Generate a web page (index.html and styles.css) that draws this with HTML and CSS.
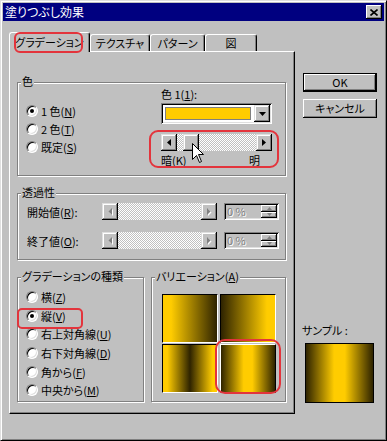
FILE: index.html
```html
<!DOCTYPE html>
<html lang="ja">
<head>
    <meta charset="UTF-8">
    <title>塗りつぶし効果</title>
    <link rel="stylesheet" href="styles.css">
</head>
<body>
    <div class="window">
        <div class="titlebar">
            <span class="title">塗りつぶし効果</span>
            <span class="close_btn">
                <svg width="8" height="7" viewBox="0 0 8 7"><path d="M0.5 0.5 L7.5 6.5 M7.5 0.5 L0.5 6.5" stroke="#000" stroke-width="1.6" fill="none"/></svg>
            </span>
        </div>
        <div class="client">
            <div class="tabs_col">
                <div class="tab_row">
                    <div class="tab active mark mark_tab" style="width:81px">グラデーション</div>
                    <div class="tab" style="width:60px">テクスチャ</div>
                    <div class="tab" style="width:55px">パターン</div>
                    <div class="tab" style="width:52px">図</div>
                </div>
                <div class="tab_panel">
                    <div class="group group_color">
                        <span class="legend">色</span>
                        <div class="radio_col">
                            <div class="radio_row"><span class="radio checked"></span><span>1 色(<u>N</u>)</span></div>
                            <div class="radio_row"><span class="radio"></span><span>2 色(<u>T</u>)</span></div>
                            <div class="radio_row"><span class="radio"></span><span>既定(<u>S</u>)</span></div>
                        </div>
                        <div class="color_col">
                            <div class="color_label">色 1(<u>1</u>):</div>
                            <div class="combo">
                                <div class="swatch"></div>
                                <div class="drop_btn">
                                    <svg width="7" height="4" viewBox="0 0 7 4"><polygon points="0,0 7,0 3.5,4" fill="#000"/></svg>
                                </div>
                            </div>
                            <div class="slider_wrap mark mark_slider">
                                <div class="scroll">
                                    <div class="sb_btn"><svg width="4" height="7" viewBox="0 0 4 7"><polygon points="4,0 4,7 0,3.5" fill="#000"/></svg></div>
                                    <div class="sb_track"><div class="sb_thumb"></div></div>
                                    <div class="sb_btn"><svg width="4" height="7" viewBox="0 0 4 7"><polygon points="0,0 0,7 4,3.5" fill="#000"/></svg></div>
                                </div>
                                <div class="slider_labels"><span>暗(<u>K</u>)</span><span>明</span></div>
                                <svg class="cursor" width="13" height="21" viewBox="0 0 13 21">
                                    <path d="M0.5 0.5 L0.5 16.5 L4.5 12.5 L7.5 19.5 L9.5 18.5 L6.5 11.5 L11.5 11.5 Z" fill="#fff" stroke="#000" stroke-width="1"/>
                                </svg>
                            </div>
                        </div>
                    </div>

                    <div class="group group_alpha">
                        <span class="legend">透過性</span>
                        <div class="alpha_row">
                            <span class="alpha_label">開始値(<u>R</u>):</span>
                            <div class="scroll disabled">
                                <div class="sb_btn"><svg width="5" height="8" viewBox="0 0 5 8"><polygon points="5,1 5,8 1.5,4.5" fill="#fff"/><polygon points="4,0 4,7 0.5,3.5" fill="#808080"/></svg></div>
                                <div class="sb_track"></div>
                                <div class="sb_btn"><svg width="5" height="8" viewBox="0 0 5 8"><polygon points="1,1 1,8 4.5,4.5" fill="#fff"/><polygon points="0,0 0,7 3.5,3.5" fill="#808080"/></svg></div>
                            </div>
                            <div class="spin">
                                <span class="spin_text">0 %</span>
                                <div class="spin_btns">
                                    <div class="spin_btn"><svg width="5" height="3" viewBox="0 0 5 3"><polygon points="0,3 5,3 2.5,0" fill="#808080"/></svg></div>
                                    <div class="spin_btn"><svg width="5" height="3" viewBox="0 0 5 3"><polygon points="0,0 5,0 2.5,3" fill="#808080"/></svg></div>
                                </div>
                            </div>
                        </div>
                        <div class="alpha_row">
                            <span class="alpha_label">終了値(<u>O</u>):</span>
                            <div class="scroll disabled">
                                <div class="sb_btn"><svg width="5" height="8" viewBox="0 0 5 8"><polygon points="5,1 5,8 1.5,4.5" fill="#fff"/><polygon points="4,0 4,7 0.5,3.5" fill="#808080"/></svg></div>
                                <div class="sb_track"></div>
                                <div class="sb_btn"><svg width="5" height="8" viewBox="0 0 5 8"><polygon points="1,1 1,8 4.5,4.5" fill="#fff"/><polygon points="0,0 0,7 3.5,3.5" fill="#808080"/></svg></div>
                            </div>
                            <div class="spin">
                                <span class="spin_text">0 %</span>
                                <div class="spin_btns">
                                    <div class="spin_btn"><svg width="5" height="3" viewBox="0 0 5 3"><polygon points="0,3 5,3 2.5,0" fill="#808080"/></svg></div>
                                    <div class="spin_btn"><svg width="5" height="3" viewBox="0 0 5 3"><polygon points="0,0 5,0 2.5,3" fill="#808080"/></svg></div>
                                </div>
                            </div>
                        </div>
                    </div>

                    <div class="bottom_row">
                        <div class="group group_type">
                            <span class="legend">グラデーションの種類</span>
                            <div class="radio_row tall"><span class="radio"></span><span>横(<u>Z</u>)</span></div>
                            <div class="radio_row tall mark mark_radio"><span class="radio checked"></span><span>縦(<u>V</u>)</span></div>
                            <div class="radio_row tall"><span class="radio"></span><span>右上対角線(<u>U</u>)</span></div>
                            <div class="radio_row tall"><span class="radio"></span><span>右下対角線(<u>D</u>)</span></div>
                            <div class="radio_row tall"><span class="radio"></span><span>角から(<u>F</u>)</span></div>
                            <div class="radio_row tall"><span class="radio"></span><span>中央から(<u>M</u>)</span></div>
                        </div>
                        <div class="group group_var">
                            <span class="legend">バリエーション(<u>A</u>)</span>
                            <div class="var_grid">
                                <div class="var_cell grad_light_dark"></div>
                                <div class="var_cell grad_dark_light"></div>
                                <div class="var_cell grad_mid_dark"></div>
                                <div class="var_cell grad_mid_light selected mark mark_cell"></div>
                            </div>
                        </div>
                    </div>
                </div>
            </div>

            <div class="side">
                <div class="btn default">OK</div>
                <div class="btn">キャンセル</div>
                <div class="sample_label">サンプル :</div>
                <div class="sample grad_mid_light"></div>
            </div>
        </div>
    </div>
</body>
</html>
```

FILE: styles.css
```css
* {
    box-sizing: border-box;
}
body {
    margin: 0;
    background: #c0c0c0;
    font-family: "Noto Sans CJK JP", sans-serif;
    font-size: 11px;
    font-feature-settings: "palt";
    color: #000;
}
u {
    text-decoration-thickness: 1px;
    text-underline-offset: 1px;
}

/* window frame */
.window {
    width: 387px;
    height: 441px;
    padding: 2px;
    border: 1px solid;
    border-color: #dfdfdf #000 #000 #dfdfdf;
    box-shadow: inset 1px 1px #fff, inset -1px -1px #808080;
    background: #c0c0c0;
    display: flex;
    flex-direction: column;
}
.titlebar {
    height: 18px;
    background: #000080;
    color: #fff;
    display: flex;
    align-items: center;
    justify-content: space-between;
    padding: 0 2px;
}
.title {
    font-size: 12px;
    line-height: 18px;
}
.close_btn {
    width: 16px;
    height: 14px;
    background: #c0c0c0;
    display: flex;
    align-items: center;
    justify-content: center;
    box-shadow: inset -1px -1px #000, inset 1px 1px #fff, inset -2px -2px #808080;
}
.client {
    display: flex;
    padding: 11px 0 0 6px;
}

/* tabs */
.tabs_col {
    width: 286px;
}
.tab_row {
    display: flex;
    align-items: flex-end;
    height: 19px;
}
.tab {
    height: 17px;
    border: 1px solid #fff;
    border-right-color: #000;
    border-bottom: none;
    border-radius: 3px 3px 0 0;
    box-shadow: inset -1px 0 #808080;
    text-align: center;
    line-height: 16px;
    white-space: nowrap;
}
.tab.active {
    height: 20px;
    margin-bottom: -1px;
    line-height: 18px;
    background: #c0c0c0;
    position: relative;
    z-index: 1;
}
.tab_panel {
    height: 363px;
    border: 1px solid;
    border-color: #fff #000 #000 #fff;
    box-shadow: inset -1px -1px #808080;
    padding: 30px 0 0 7px;
}

/* group boxes */
.group {
    position: relative;
    border: 1px solid #808080;
    box-shadow: inset 1px 1px #fff, 1px 1px #fff;
}
.legend {
    position: absolute;
    left: 3px;
    top: -9px;
    padding: 0 1px;
    background: #c0c0c0;
    line-height: 14px;
    white-space: nowrap;
}
.group_color {
    width: 269px;
    height: 94px;
    display: flex;
    align-items: flex-start;
}
.radio_col {
    width: 135px;
    margin-left: 8px;
    padding-top: 19px;
}
.radio_row {
    display: flex;
    align-items: center;
    gap: 3px;
    height: 18px;
    white-space: nowrap;
}
.radio_row.tall {
    height: 18.6px;
}
.radio {
    position: relative;
    width: 12px;
    height: 12px;
    border-radius: 50%;
    background: #fff;
    border: 1px solid;
    border-color: #808080 #fff #fff #808080;
    box-shadow: inset 1px 1px #000, inset -1px -1px #dfdfdf;
    flex: none;
}
.radio.checked::after {
    content: "";
    position: absolute;
    left: 3px;
    top: 3px;
    width: 4px;
    height: 4px;
    border-radius: 50%;
    background: #000;
}
.color_col {
    width: 111px;
    padding-top: 4px;
}
.color_label {
    line-height: 14px;
}
.combo {
    margin-top: 2px;
    height: 21px;
    display: flex;
    padding: 2px;
    background: #fff;
    box-shadow: inset 1px 1px #808080, inset -1px -1px #fff, inset 2px 2px #000, inset -2px -2px #dfdfdf;
}
.swatch {
    flex: 1;
    margin: 2px 3px 2px 2px;
    border: 1px solid #808080;
    background: #ffcc00;
}
.drop_btn {
    width: 16px;
    background: #c0c0c0;
    display: flex;
    align-items: center;
    justify-content: center;
    box-shadow: inset -1px -1px #000, inset 1px 1px #dfdfdf, inset -2px -2px #808080, inset 2px 2px #fff;
}

/* scrollbars */
.slider_wrap {
    position: relative;
    margin-top: 10px;
}
.scroll {
    display: flex;
    height: 17px;
}
.sb_btn {
    width: 16px;
    background: #c0c0c0;
    display: flex;
    align-items: center;
    justify-content: center;
    box-shadow: inset -1px -1px #000, inset 1px 1px #dfdfdf, inset -2px -2px #808080, inset 2px 2px #fff;
}
.sb_track {
    flex: 1;
    background: repeating-conic-gradient(#fff 0 25%, #c0c0c0 0 50%) 0 0 / 2px 2px;
}
.sb_thumb {
    width: 16px;
    height: 17px;
    margin-left: 6px;
    background: #c0c0c0;
    box-shadow: inset -1px -1px #000, inset 1px 1px #dfdfdf, inset -2px -2px #808080, inset 2px 2px #fff;
}
.slider_labels {
    display: flex;
    justify-content: space-between;
    padding-right: 12px;
    margin-top: 2px;
    line-height: 14px;
}
.cursor {
    position: absolute;
    left: 31px;
    top: 9px;
}

/* transparency */
.group_alpha {
    width: 269px;
    height: 67px;
    margin-top: 17px;
    padding: 9px 0 0 9px;
}
.alpha_row {
    display: flex;
    align-items: center;
    height: 17px;
    margin-bottom: 12px;
}
.alpha_label {
    width: 75px;
    white-space: nowrap;
}
.scroll.disabled {
    width: 115px;
}
.spin {
    width: 55px;
    height: 17px;
    margin-left: 7px;
    display: flex;
    justify-content: space-between;
    padding: 2px;
    box-shadow: inset 1px 1px #808080, inset -1px -1px #fff, inset 2px 2px #000, inset -2px -2px #dfdfdf;
}
.spin_text {
    color: #808080;
    text-shadow: 1px 1px #fff;
    line-height: 13px;
    padding-left: 1px;
}
.spin_btns {
    width: 16px;
    display: flex;
    flex-direction: column;
}
.spin_btn {
    flex: 1;
    display: flex;
    align-items: center;
    justify-content: center;
    box-shadow: inset -1px -1px #000, inset 1px 1px #fff, inset -2px -2px #808080;
}

/* bottom groups */
.bottom_row {
    display: flex;
    gap: 7px;
    margin-top: 17px;
}
.group_type {
    width: 127px;
    height: 125px;
    padding: 10px 0 0 8px;
}
.group_var {
    width: 135px;
    height: 125px;
    padding: 16px 0 0 10px;
}
.var_grid {
    display: grid;
    grid-template-columns: 56px 56px;
    grid-template-rows: 49px 49px;
    column-gap: 2px;
    row-gap: 1px;
}
.var_cell {
    border: 1px solid;
    border-color: #000 #fff #fff #000;
}
.var_cell.selected {
    border-color: #fff #000 #000 #fff;
}
.grad_light_dark {
    background: linear-gradient(90deg, #ffcc00 0%, #ffcc00 15%, #2e2300 100%);
}
.grad_dark_light {
    background: linear-gradient(90deg, #2e2300 0%, #ffcc00 85%, #ffcc00 100%);
}
.grad_mid_dark {
    background: linear-gradient(90deg, #ffcc00 0%, #ffcc00 8%, #2e2300 50%, #ffcc00 92%, #ffcc00 100%);
}
.grad_mid_light {
    background: linear-gradient(90deg, #2e2300 0%, #ffcc00 42%, #ffcc00 58%, #2e2300 100%);
}

/* right side */
.side {
    margin-left: 8px;
    padding-top: 41px;
    width: 74px;
}
.btn {
    width: 74px;
    height: 19px;
    text-align: center;
    line-height: 19px;
    box-shadow: inset -1px -1px #000, inset 1px 1px #fff, inset -2px -2px #808080;
}
.btn + .btn {
    margin-top: 7px;
}
.btn.default {
    line-height: 17px;
    border: 1px solid #000;
}
.sample_label {
    margin-top: 205px;
    margin-left: -1px;
    line-height: 14px;
    white-space: nowrap;
}
.sample {
    width: 69px;
    height: 60px;
    margin: 6px 0 0 2px;
    border: 1px solid #000;
}

/* red highlight marks */
.mark {
    position: relative;
}
.mark::before {
    content: "";
    position: absolute;
    border: 2px solid #e3343c;
    pointer-events: none;
    z-index: 2;
}
.mark_tab::before {
    left: 4px;
    right: 6px;
    top: -1px;
    bottom: -1px;
    border-radius: 6px;
}
.mark_slider::before {
    left: -12px;
    right: -7px;
    top: -4px;
    bottom: -1px;
    border-radius: 9px;
}
.mark_radio::before {
    left: -9px;
    top: 1px;
    width: 62px;
    height: 17px;
    border-radius: 5px;
}
.mark_cell::before {
    left: -6px;
    right: -6px;
    top: -6px;
    bottom: -2px;
    border-radius: 10px;
}
```
